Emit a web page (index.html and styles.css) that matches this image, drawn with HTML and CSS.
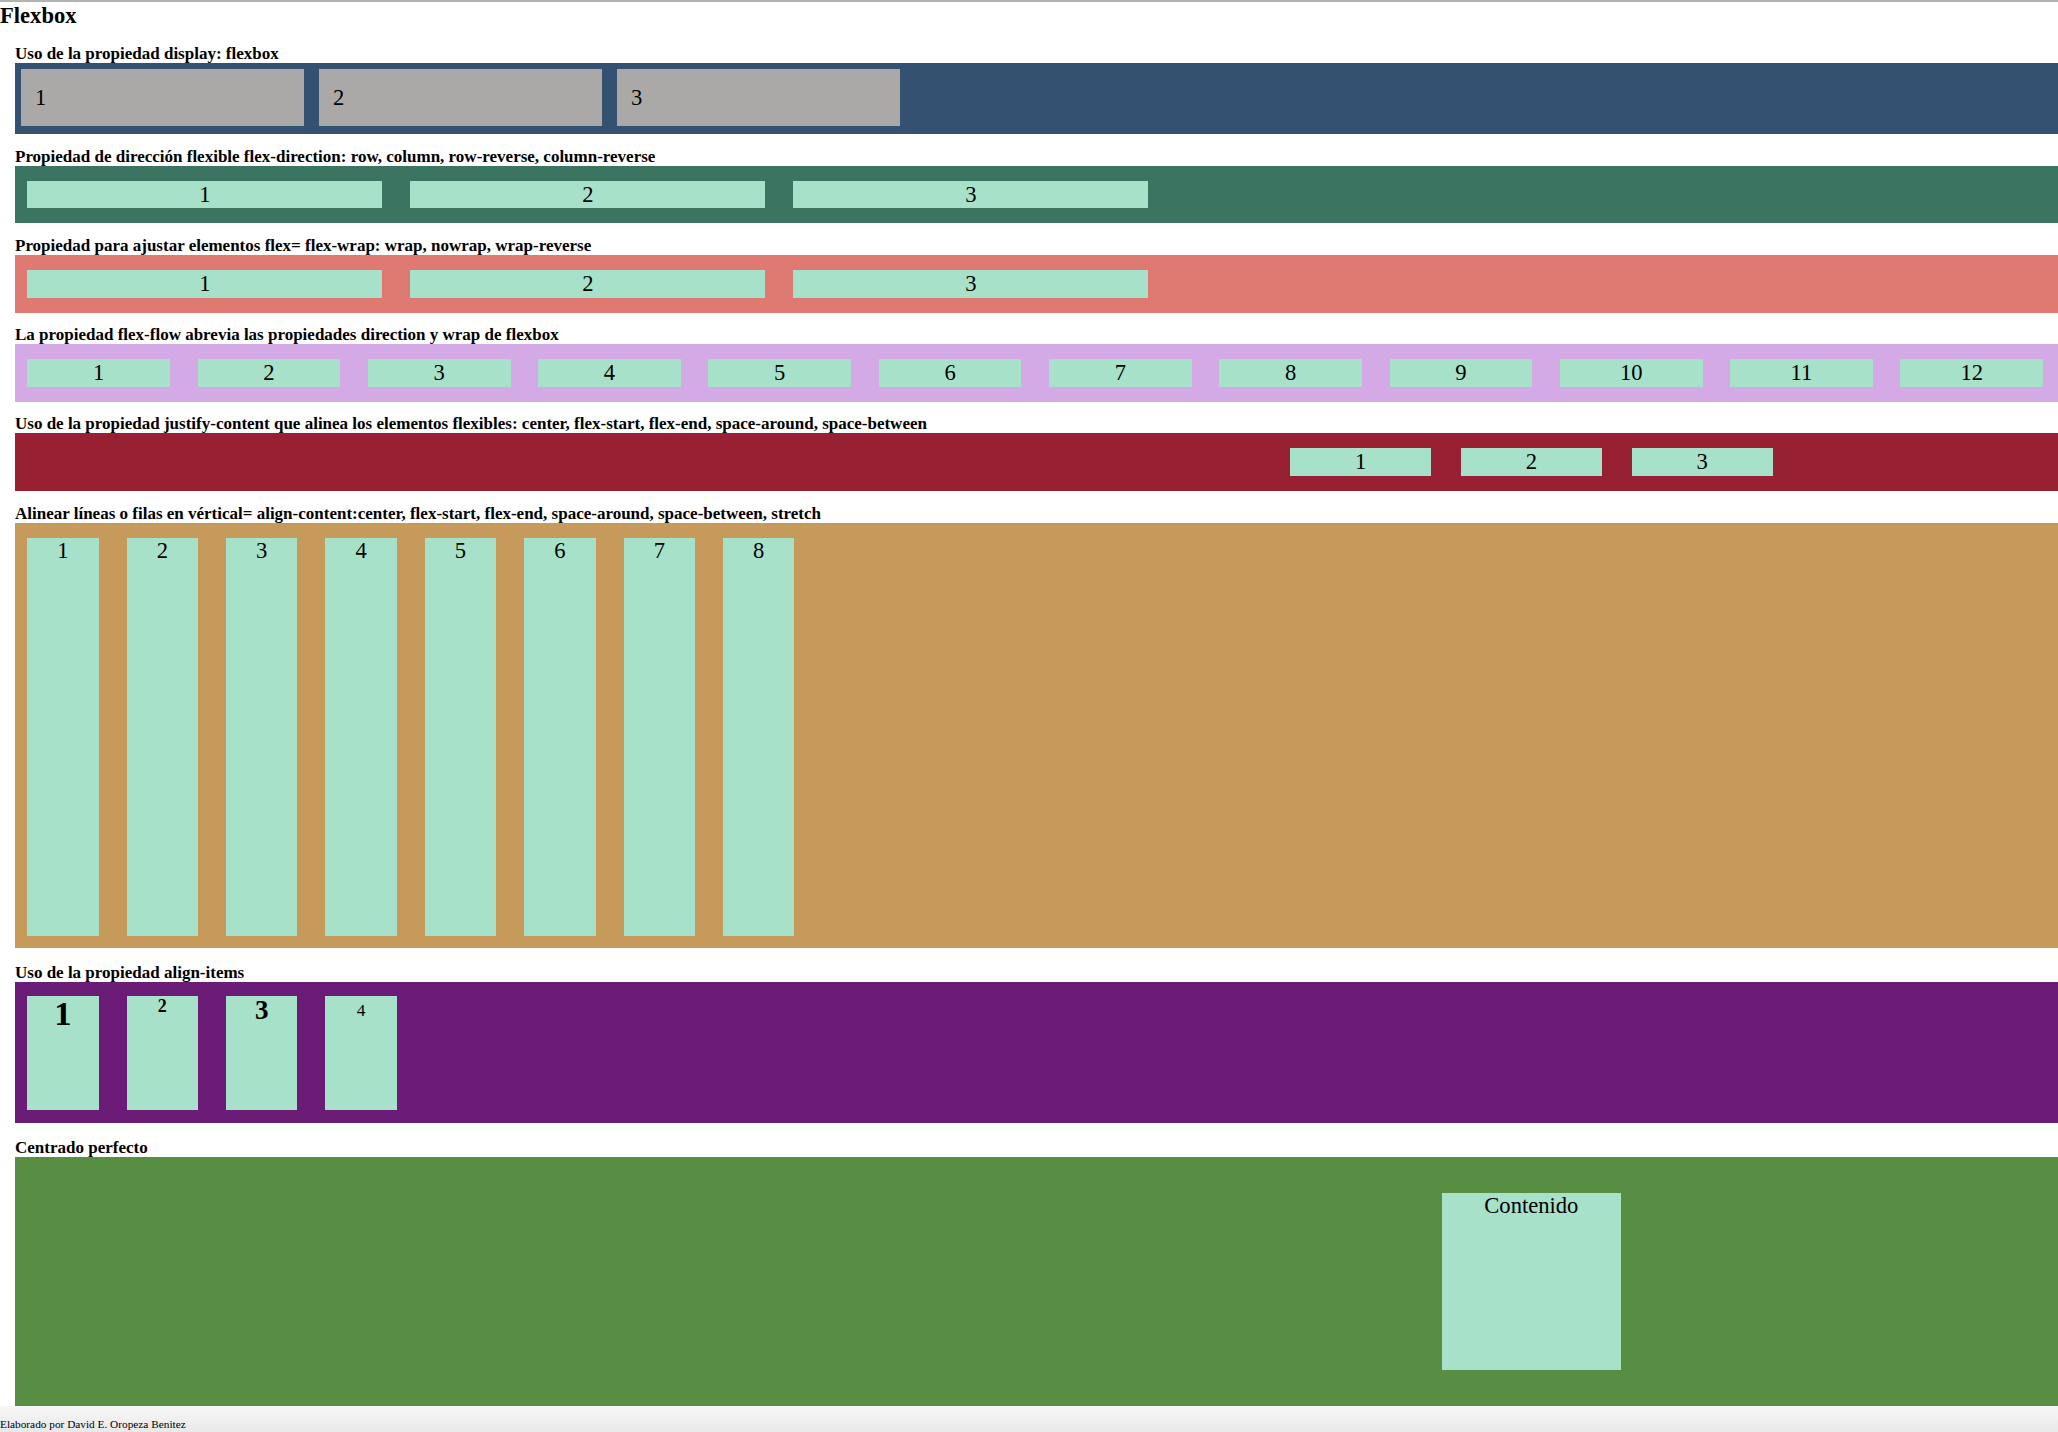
FILE: index.html
```html
<!DOCTYPE html>
<html lang="es">
<head>
<meta charset="utf-8">
<title>Flexbox</title>
<link rel="stylesheet" href="styles.css">
</head>
<body>
<div class="page">
  <h1 class="title">Flexbox</h1>

  <section class="demo demo-display">
    <h4 class="label">Uso de la propiedad display: flexbox</h4>
    <div class="box box-display">
      <div class="item item-gray">1</div>
      <div class="item item-gray">2</div>
      <div class="item item-gray">3</div>
    </div>
  </section>

  <section class="demo demo-direction">
    <h4 class="label">Propiedad de dirección flexible flex-direction: row, column, row-reverse, column-reverse</h4>
    <div class="box box-direction">
      <div class="item item-wide">1</div>
      <div class="item item-wide">2</div>
      <div class="item item-wide">3</div>
    </div>
  </section>

  <section class="demo demo-wrap">
    <h4 class="label">Propiedad para ajustar elementos flex= flex-wrap: wrap, nowrap, wrap-reverse</h4>
    <div class="box box-wrap">
      <div class="item item-wide">1</div>
      <div class="item item-wide">2</div>
      <div class="item item-wide">3</div>
    </div>
  </section>

  <section class="demo demo-flow">
    <h4 class="label">La propiedad flex-flow abrevia las propiedades direction y wrap de flexbox</h4>
    <div class="box box-flow">
      <div class="item item-flow">1</div>
      <div class="item item-flow">2</div>
      <div class="item item-flow">3</div>
      <div class="item item-flow">4</div>
      <div class="item item-flow">5</div>
      <div class="item item-flow">6</div>
      <div class="item item-flow">7</div>
      <div class="item item-flow">8</div>
      <div class="item item-flow">9</div>
      <div class="item item-flow">10</div>
      <div class="item item-flow">11</div>
      <div class="item item-flow">12</div>
    </div>
  </section>

  <section class="demo demo-justify">
    <h4 class="label">Uso de la propiedad justify-content que alinea los elementos flexibles: center, flex-start, flex-end, space-around, space-between</h4>
    <div class="box box-justify">
      <div class="item item-justify">1</div>
      <div class="item item-justify">2</div>
      <div class="item item-justify">3</div>
    </div>
  </section>

  <section class="demo demo-align-content">
    <h4 class="label">Alinear líneas o filas en vértical= align-content:center, flex-start, flex-end, space-around, space-between, stretch</h4>
    <div class="box box-align-content">
      <div class="item item-tall">1</div>
      <div class="item item-tall">2</div>
      <div class="item item-tall">3</div>
      <div class="item item-tall">4</div>
      <div class="item item-tall">5</div>
      <div class="item item-tall">6</div>
      <div class="item item-tall">7</div>
      <div class="item item-tall">8</div>
    </div>
  </section>

  <section class="demo demo-align-items">
    <h4 class="label">Uso de la propiedad align-items</h4>
    <div class="box box-align-items">
      <div class="item item-tall"><div class="num num-xl">1</div></div>
      <div class="item item-tall"><div class="num num-s">2</div></div>
      <div class="item item-tall"><div class="num num-l">3</div></div>
      <div class="item item-tall"><div class="num num-xs">4</div></div>
    </div>
  </section>

  <section class="demo demo-center">
    <h4 class="label">Centrado perfecto</h4>
    <div class="box box-center">
      <div class="item item-center">Contenido</div>
    </div>
  </section>
</div>
<footer class="footer">Elaborado por David E. Oropeza Benitez</footer>
</body>
</html>
```

FILE: styles.css
```css
html {
  overflow: hidden;
}

body {
  margin: 0;
  border-top: 2px solid #b3b3b3;
  background: #ffffff;
  color: #000000;
  font-family: "Liberation Serif", "Times New Roman", serif;
}

.page {
  overflow: hidden;
}

.title {
  margin: 0.7px 0 0;
  font-size: 22.6px;
  line-height: 26px;
  font-weight: bold;
}

.demo {
  margin-left: 15px;
  width: 3032.7px;
}

.demo-display { margin-top: 15.6px; }
.demo-direction { margin-top: 12.7px; }
.demo-wrap { margin-top: 13.3px; }
.demo-flow { margin-top: 12.6px; }
.demo-justify { margin-top: 12.6px; }
.demo-align-content { margin-top: 13px; }
.demo-align-items { margin-top: 15px; }
.demo-center { margin-top: 15.3px; }

.label {
  margin: 0;
  font-size: 17px;
  line-height: 19px;
  font-weight: bold;
  white-space: nowrap;
}

.box {
  display: flex;
  box-sizing: border-box;
  font-size: 22.6px;
  align-items: flex-start;
}

.item {
  flex: none;
  box-sizing: border-box;
  background: #a8e1c9;
}

/* display: flex */
.box-display {
  height: 70.7px;
  padding: 6px 0 0 6px;
  gap: 14.7px;
  background: #345171;
}

.item-gray {
  width: 283.3px;
  height: 56.4px;
  padding: 16px 14px 0;
  line-height: 26px;
  background: #aaa9a7;
}

/* flex-direction / flex-wrap */
.box-direction,
.box-wrap {
  padding: 15px 0 0 12.3px;
  gap: 28px;
}

.box-direction {
  height: 57.3px;
  background: #3b7461;
}

.box-wrap {
  height: 57.4px;
  background: #df7a72;
}

.item-wide {
  width: 355px;
  height: 27.6px;
  line-height: 27.6px;
  text-align: center;
}

/* flex-flow */
.box-flow {
  height: 57.4px;
  padding: 15px 0 0 12.3px;
  gap: 27.6px;
  background: #d3aae6;
}

.item-flow {
  width: 142.7px;
  height: 27.7px;
  line-height: 27.7px;
  text-align: center;
}

/* justify-content */
.box-justify {
  height: 57.7px;
  padding-top: 15px;
  gap: 29.7px;
  justify-content: center;
  background: #972032;
}

.item-justify {
  width: 141px;
  height: 28px;
  line-height: 28px;
  text-align: center;
}

/* align-content */
.box-align-content {
  height: 425.3px;
  padding: 15px 0 12.6px 12.3px;
  gap: 28.1px;
  align-items: stretch;
  background: #c59a5a;
}

.item-tall {
  width: 71.3px;
  line-height: 26px;
  text-align: center;
}

/* align-items */
.box-align-items {
  height: 140.4px;
  padding: 13.4px 0 12.7px 12.3px;
  gap: 28.1px;
  align-items: stretch;
  background: #6b1c76;
}

.num-xl {
  font-size: 34.5px;
  line-height: 34.5px;
  font-weight: bold;
}

.num-s {
  font-size: 18px;
  line-height: 21px;
  font-weight: bold;
}

.num-l {
  font-size: 27px;
  line-height: 29px;
  font-weight: bold;
}

.num-xs {
  font-size: 17.3px;
  line-height: 30.5px;
}

/* centrado perfecto */
.box-center {
  height: 248.7px;
  justify-content: center;
  align-items: center;
  background: #588e43;
}

.item-center {
  width: 178.7px;
  height: 176.7px;
  line-height: 26px;
  text-align: center;
}

.footer {
  height: 26.3px;
  box-sizing: border-box;
  padding-top: 12.3px;
  font-size: 11.3px;
  line-height: 13px;
  white-space: nowrap;
  background: linear-gradient(to bottom, #f7f7f7, #e9e9e9);
}
```
